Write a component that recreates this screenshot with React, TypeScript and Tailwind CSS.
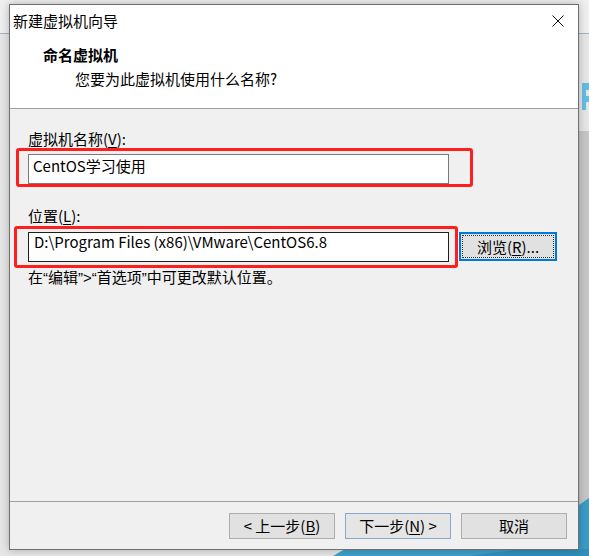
import React from 'react';

const font = { fontFamily: '"Noto Sans CJK SC", "Noto Sans", sans-serif' };

// underlined accelerator key, e.g. (V)
const Key = ({ k }: { k: string }) => (
  <>
    (<span className="underline underline-offset-2">{k}</span>)
  </>
);

// latin punctuation (narrow quotes) inside CJK text
const Q = ({ c }: { c: string }) => <span style={{ fontFamily: '"Liberation Sans", sans-serif' }}>{c}</span>;

const Desktop = () => (
  <svg className="absolute inset-0" width="589" height="556" viewBox="0 0 589 556">
    <rect x="0" y="0" width="589" height="556" fill="#e6e6e6" />
    <rect x="0" y="0" width="589" height="33" fill="#efefef" />
    <rect x="0" y="33" width="589" height="1" fill="#9fb3c6" />
    <rect x="579" y="131" width="10" height="380" fill="#c6c6c6" />
    <path d="M582 83 H589 V90 H586 V96 H589 V102 H586 V110 H582 Z" fill="#62bde3" />
    <polygon points="579,505 589,498 589,556 579,556" fill="#3a9cc6" />
    <polygon points="333,556 345,549 589,549 589,556" fill="#3f9fc9" />
    <polygon points="470,556 520,549 589,549 589,556" fill="#2f8fbc" />
  </svg>
);

const CloseIcon = () => (
  <svg width="12" height="12" viewBox="0 0 12 12">
    <path d="M0.5 0.5 L11.5 11.5 M11.5 0.5 L0.5 11.5" stroke="#111" strokeWidth="1" />
  </svg>
);

const Button = ({ children, primary }: { children: React.ReactNode; primary?: boolean }) => (
  <div
    className={`w-[106px] h-[26px] flex items-center justify-center border bg-[#e1e1e1] text-[15px] leading-[20px] ${
      primary ? 'border-[#8aa9c9] bg-[#e5e5e5]' : 'border-[#adadad]'
    }`}
  >
    {children}
  </div>
);

export default function App() {
  return (
    <div className="relative w-[589px] h-[556px] overflow-hidden text-black" style={font}>
      <Desktop />

      {/* dialog window */}
      <div className="absolute left-[9px] top-[4px] w-[570px] h-[546px] border border-[#6f6f6f] bg-[#f0f0f0] flex flex-col shadow-[0_0_8px_rgba(0,0,0,0.25)]">
        <div className="bg-white border-b border-[#a0a0a0] pb-[19px]">
          <div className="h-[31px] flex items-center justify-between pl-[3px] pr-[14px]">
            <span className="text-[15px] leading-[20px]">新建虚拟机向导</span>
            <CloseIcon />
          </div>
          <div className="mt-[9px] pl-[33px] text-[15px] leading-[20px] font-bold">命名虚拟机</div>
          <div className="mt-[4px] pl-[65px] text-[15px] leading-[20px]">您要为此虚拟机使用什么名称?</div>
        </div>

        <div className="flex-1 flex flex-col px-[18px] text-[15px] leading-[20px]">
          <div className="mt-[20px]">
            虚拟机名称<Key k="V" />:
          </div>
          <div className="mt-[5px] w-[421px] h-[30px] bg-white border border-[#7a7a7a] pl-[4px] pt-[1px]">
            CentOS学习使用
          </div>

          <div className="mt-[22px]">
            位置<Key k="L" />:
          </div>
          <div className="mt-[6px] flex items-start">
            <div className="w-[421px] h-[30px] bg-white border border-[#1e1e1e] pl-[5px] leading-[17px]">
              D:\Program Files (x86)\VMware\CentOS6.8
            </div>
            <div className="ml-[10px] w-[98px] h-[29px] border-2 border-[#0078d7] bg-[#e1e1e1] p-[1px]">
              <div className="h-full border border-dotted border-[#333] flex items-center justify-center">
                浏览<Key k="R" />...
              </div>
            </div>
          </div>

          <div className="mt-[5px]">
            在<Q c="“" />编辑<Q c="”>“" />首选项<Q c="”" />中可更改默认位置。
          </div>
        </div>

        <div className="border-t border-[#a0a0a0] pt-[11px] pb-[10px] pr-[11px] flex justify-end gap-[10px]">
          <Button>
            &lt;&nbsp;上一步<Key k="B" />
          </Button>
          <Button primary>
            下一步<Key k="N" />&nbsp;&gt;
          </Button>
          <Button>取消</Button>
        </div>
      </div>

      {/* red annotation boxes */}
      <div className="absolute left-[16px] top-[148px] w-[457px] h-[39px] border-[3px] border-[#ff1e1e] rounded-[3px]" />
      <div className="absolute left-[14px] top-[226px] w-[444px] h-[42px] border-[3px] border-[#ff1e1e] rounded-[3px]" />
    </div>
  );
}
